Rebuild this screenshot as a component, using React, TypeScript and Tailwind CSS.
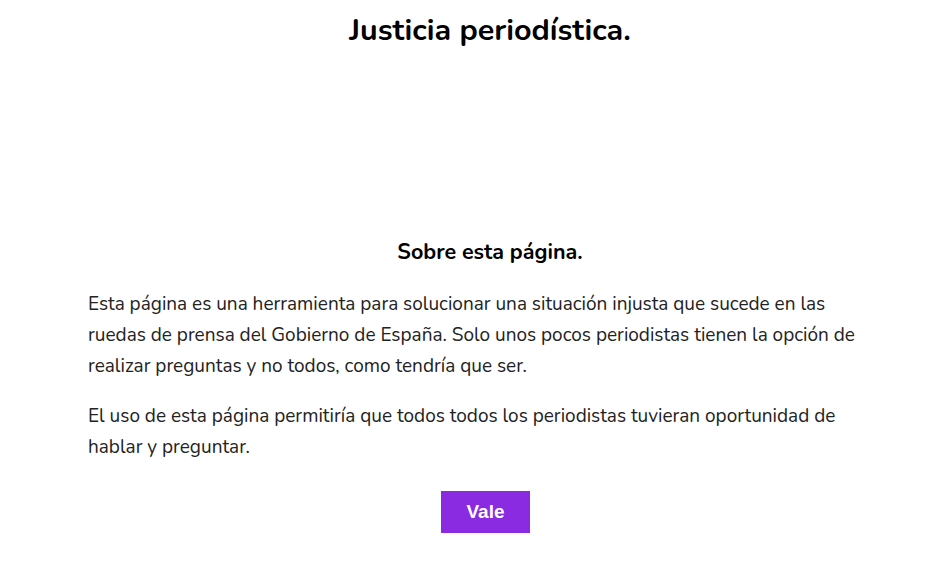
export default function App() {
  return (
    <div className="min-h-[583px] bg-white font-['Nunito','Lato',sans-serif] text-black">
      <header className="pl-[88px] pr-[57px] pt-[10px]">
        <h1 className="text-center text-[30.5px] font-bold leading-[40px]">
          Justicia periodística.
        </h1>
      </header>
      <section className="mt-[188px] pl-[88px] pr-[57px]">
        <h2 className="text-center text-[21.5px] font-bold leading-[28px]">
          Sobre esta página.
        </h2>
        <div className="mr-[22px] mt-[23px] space-y-[19px] text-[19px] leading-[31px] text-[#222]">
          <p>
            Esta página es una herramienta para solucionar una situación injusta que sucede en las
            ruedas de prensa del Gobierno de España. Solo unos pocos periodistas tienen la opción de
            realizar preguntas y no todos, como tendría que ser.
          </p>
          <p>
            El uso de esta página permitiría que todos todos los periodistas tuvieran oportunidad de
            hablar y preguntar.
          </p>
        </div>
        <div className="mt-[28px] flex justify-center pr-[9px]">
          <button className="h-[42px] w-[89px] bg-[#8a2be2] font-['Liberation_Sans',Arial,sans-serif] text-[19px] font-bold text-white">
            Vale
          </button>
        </div>
      </section>
    </div>
  );
}
